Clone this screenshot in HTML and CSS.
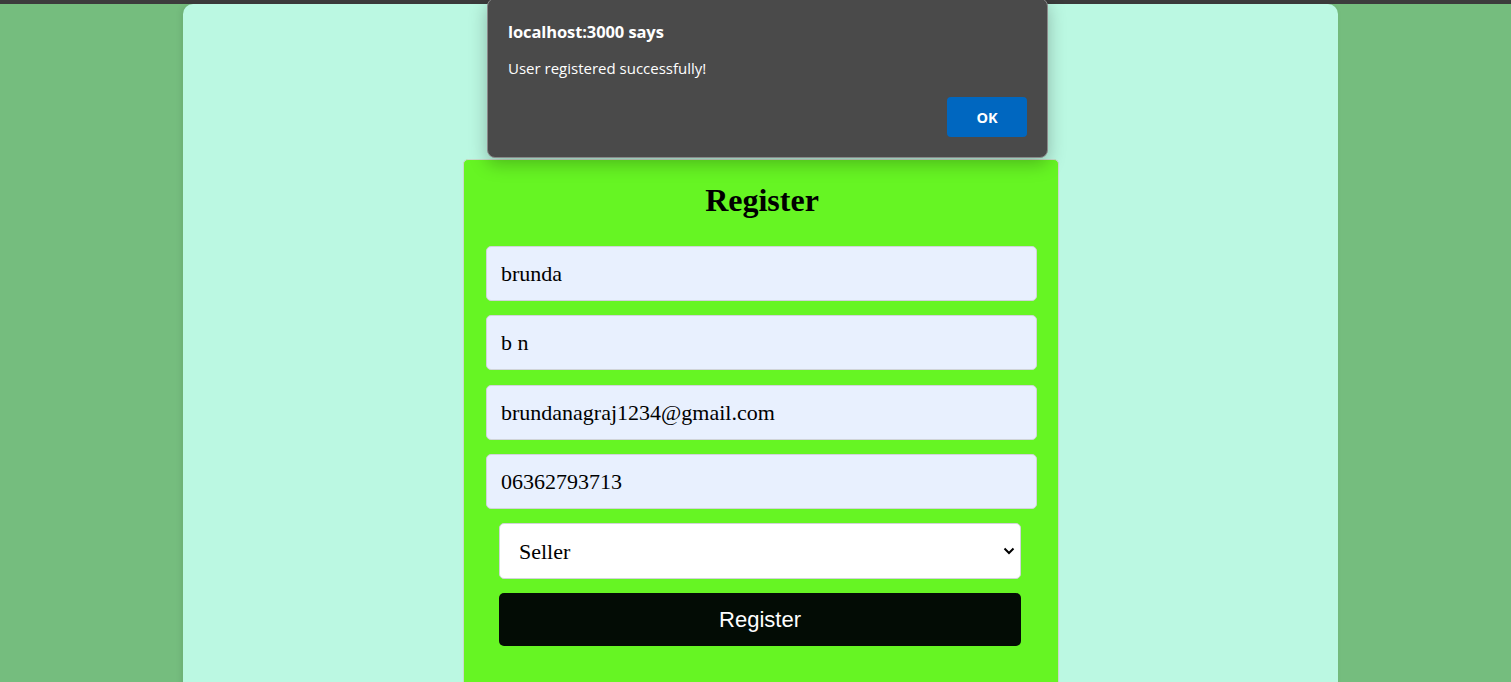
FILE: index.html
```html
<!DOCTYPE html>
<html lang="en">
<head>
<meta charset="utf-8">
<title>Register</title>
<link rel="stylesheet" href="styles.css">
</head>
<body>
<div class="topbar"></div>
<div class="page">
  <main class="panel">
    <form class="register-box">
      <h1 class="title">Register</h1>
      <input class="field" type="text" value="brunda">
      <input class="field" type="text" value="b n">
      <input class="field" type="email" value="brundanagraj1234@gmail.com">
      <input class="field" type="text" value="06362793713">
      <div class="select-wrap">
        <select class="role">
          <option>Seller</option>
          <option>Buyer</option>
        </select>
      </div>
      <button class="submit" type="button">Register</button>
    </form>
  </main>
</div>
<div class="dialog">
  <div class="dialog-title">localhost:3000 says</div>
  <div class="dialog-msg">User registered successfully!</div>
  <div class="dialog-actions"><button class="ok" type="button">OK</button></div>
</div>
</body>
</html>
```

FILE: styles.css
```css
* { box-sizing: border-box; }
html, body { margin: 0; height: 100%; }
body {
  background: #75bd7e;
  font-family: "Liberation Serif", "Times New Roman", serif;
  overflow: hidden;
  display: flex;
  flex-direction: column;
}
.topbar {
  height: 4px;
  background: #3c3c3c;
  flex: none;
}
.page {
  flex: 1;
  display: flex;
  padding: 0 173px 0 183px;
}
.panel {
  flex: 1;
  background: #bbf8e2;
  border-radius: 10px 10px 0 0;
  padding-top: 155px;
  padding-left: 280px;
  box-shadow: -2px 0 6px rgba(0,0,0,0.08);
}
.register-box {
  width: 596px;
  height: 560px;
  background: #66f523;
  border: 1px solid #c9d9c9;
  border-radius: 5px;
  padding: 22px 20px 0 22px;
  display: flex;
  flex-direction: column;
  align-items: flex-start;
}
.title {
  margin: 0 0 27px;
  align-self: stretch;
  text-align: center;
  font-size: 32px;
  font-weight: bold;
  line-height: 37px;
  color: #000;
}
.field {
  width: 551px;
  height: 55px;
  margin: 0 0 14px;
  padding: 0 14px;
  border: 1px solid #d0d4d8;
  border-radius: 5px;
  background: #e8f0fe;
  font-family: "Liberation Serif", "Times New Roman", serif;
  font-size: 22px;
  color: #000;
  outline: none;
}
.field:nth-of-type(2) { margin-bottom: 15px; }
.select-wrap {
  margin-left: 13px;
  width: 522px;
}
.role {
  display: block;
  width: 522px;
  height: 56px;
  padding: 0 19px;
  border: 1px solid #d0d4d8;
  border-radius: 5px;
  background: #fff;
  font-family: "Liberation Serif", "Times New Roman", serif;
  font-size: 22px;
  color: #000;
  -webkit-appearance: none;
  appearance: none;
  background-image: url("data:image/svg+xml;utf8,<svg xmlns='http://www.w3.org/2000/svg' width='12' height='8' viewBox='0 0 12 8'><path d='M1.5 1.5 L6 6 L10.5 1.5' fill='none' stroke='black' stroke-width='2'/></svg>");
  background-repeat: no-repeat;
  background-position: right 5px center;
  background-size: 12px 8px;
  margin-bottom: 14px;
}
.submit {
  margin-left: 13px;
  width: 522px;
  height: 53px;
  border: none;
  border-radius: 5px;
  background: #030c05;
  color: #fff;
  font-family: "Liberation Sans", Arial, sans-serif;
  font-size: 22px;
}
.dialog {
  position: absolute;
  left: 487px;
  top: -2px;
  width: 561px;
  height: 160px;
  background: #4a4a4a;
  border: 1px solid #8a8a8a;
  border-radius: 8px;
  box-shadow: 0 6px 18px rgba(0,0,0,0.25);
  padding: 20px 20px 0 20px;
  font-family: "Open Sans", "Noto Sans", sans-serif;
  color: #fff;
}
.dialog-title {
  font-weight: bold;
  font-size: 16.5px;
  line-height: 20px;
  margin-top: 3px;
  letter-spacing: -0.1px;
}
.dialog-msg {
  font-size: 15px;
  line-height: 20px;
  margin-top: 16px;
}
.dialog-actions {
  display: flex;
  justify-content: flex-end;
  margin-top: 19px;
}
.ok {
  width: 80px;
  height: 40px;
  border: none;
  border-radius: 4px;
  background: #0067c0;
  color: #fff;
  font-family: "Open Sans", "Noto Sans", sans-serif;
  font-weight: bold;
  font-size: 14.5px;
}
```
